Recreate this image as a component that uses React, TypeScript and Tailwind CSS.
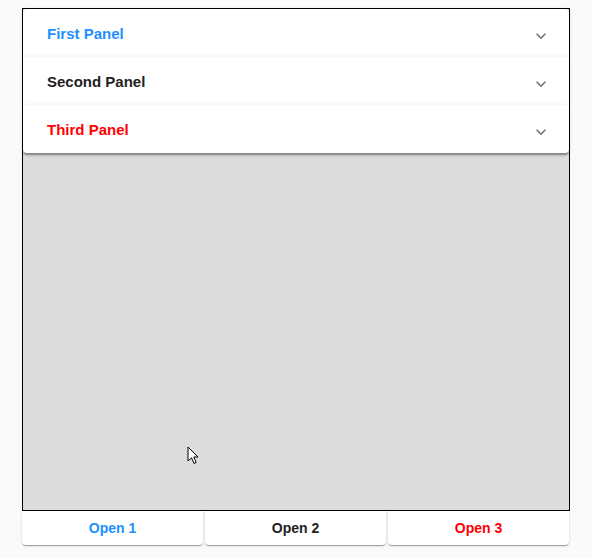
import React from 'react';

const panels = [
  { title: 'First Panel', color: 'text-[#1e90ff]', rounded: 'rounded-t-[4px]' },
  { title: 'Second Panel', color: 'text-[#222222]', rounded: '' },
  { title: 'Third Panel', color: 'text-[#ff0000]', rounded: 'rounded-b-[4px]' },
];

const buttons = [
  { label: 'Open 1', color: 'text-[#1e90ff]' },
  { label: 'Open 2', color: 'text-[#222222]' },
  { label: 'Open 3', color: 'text-[#ff0000]' },
];

/**
 * Expand chevron (same shape as the MUI ExpandMore icon)
 */
function ExpandMore() {
  return (
    <svg viewBox="0 0 24 24" className="w-5 h-5 fill-[#757575] mt-[6px]">
      <path d="M16.59 8.59 12 13.17 7.41 8.59 6 10l6 6 6-6z" />
    </svg>
  );
}

export default function App() {
  return (
    <div
      className="bg-[#fafafa] h-[557px] pt-2 px-[22px]"
      style={{ fontFamily: '"Liberation Sans", Arial, sans-serif' }}
    >
      {/* Drawer area */}
      <div className="relative h-[503px] border border-black bg-[#dcdcdc]">
        <div className="flex flex-col">
          {panels.map((p) => (
            <div
              key={p.title}
              className={`relative flex items-center justify-between h-12 pl-6 pr-[18px] bg-white shadow-[0px_3px_2px_-1px_rgba(0,0,0,0.25),0px_2px_2px_0px_rgba(0,0,0,0.14),0px_1px_5px_0px_rgba(0,0,0,0.12)] ${p.rounded}`}
            >
              <span className={`text-[15px] font-bold mt-[2px] ${p.color}`}>{p.title}</span>
              <ExpandMore />
            </div>
          ))}
        </div>

        {/* Mouse pointer */}
        <svg
          viewBox="0 0 14 20"
          className="absolute left-[164px] top-[437px] w-[14px] h-[20px]"
        >
          <path
            d="M1 1 L1 15 L4.5 11.8 L7 17.5 L9.2 16.5 L6.8 11 L11 11 Z"
            fill="white"
            stroke="black"
            strokeWidth="1"
            strokeLinejoin="miter"
          />
        </svg>
      </div>

      {/* Buttons */}
      <div className="flex gap-[2px] pr-px">
        {buttons.map((b) => (
          <button
            key={b.label}
            className={`flex-1 h-[34px] bg-white rounded-b-[4px] text-[14px] font-bold shadow-[0px_2px_1px_-1px_rgba(0,0,0,0.2),0px_1px_1px_0px_rgba(0,0,0,0.14),0px_1px_3px_0px_rgba(0,0,0,0.12)] ${b.color}`}
          >
            {b.label}
          </button>
        ))}
      </div>
    </div>
  );
}
